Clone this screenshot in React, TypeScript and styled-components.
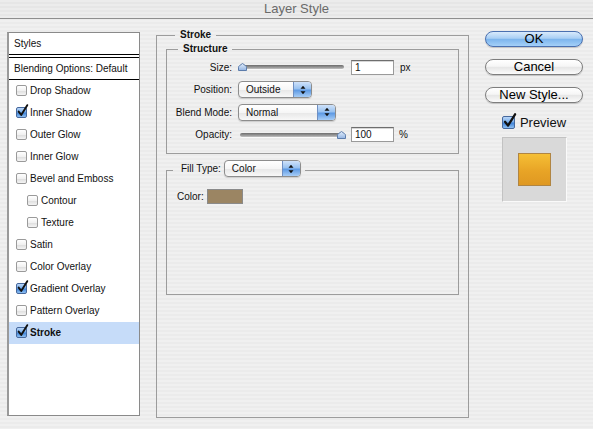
import React from 'react';
import styled, {createGlobalStyle} from 'styled-components';

const GlobalStyle = createGlobalStyle`
  html, body {
    margin: 0;
    padding: 0;
  }
  body {
    width: 593px;
    height: 429px;
    overflow: hidden;
    font-family: "Liberation Sans", Arial, sans-serif;
    color: #111;
    background: repeating-linear-gradient(to bottom, #f0f0f0 0, #f0f0f0 2px, #ebebeb 2px, #ebebeb 4px);
  }
`;

const Window = styled.div`
  width: 593px;
  height: 429px;
  display: flex;
  flex-direction: column;
`;

const TitleBar = styled.div`
  height: 18px;
  line-height: 18px;
  border-bottom: 1px solid #8e8e8e;
  text-align: center;
  font-size: 13px;
  color: #6a6a6a;
  background: repeating-linear-gradient(to bottom, #ececec 0, #ececec 2px, #e6e6e6 2px, #e6e6e6 4px);
`;

const Main = styled.div`
  display: flex;
  align-items: flex-start;
  gap: 16px;
  padding-left: 7px;
`;

/* ---------- left list ---------- */

const StylesPanel = styled.div`
  width: 133px;
  height: 384px;
  margin-top: 13px;
  box-sizing: border-box;
  border: 1px solid #8a8a8a;
  border-left: 2px solid #9a9a9a;
  background: #fff;
  font-size: 10px;
`;

const PanelHeader = styled.div`
  height: 21px;
  line-height: 21px;
  padding-left: 5px;
  border-bottom: 1px solid #000;
`;

const BlendingRow = styled.div`
  height: 21px;
  line-height: 21px;
  margin-top: 2px;
  padding-left: 5px;
  border-top: 1px solid #000;
  border-bottom: 1px solid #000;
`;

const StyleItem = styled.div<{$indent?: boolean; $selected?: boolean}>`
  height: 22px;
  box-sizing: border-box;
  display: flex;
  align-items: center;
  gap: 3px;
  padding: 0 0 2px ${p => (p.$indent ? 18 : 7)}px;
  background: ${p => (p.$selected ? '#c6dcf9' : 'transparent')};
  font-weight: ${p => (p.$selected ? 'bold' : 'normal')};
`;

const Box = styled.span<{$checked?: boolean; $size: number}>`
  position: relative;
  flex: none;
  width: ${p => p.$size}px;
  height: ${p => p.$size}px;
  box-sizing: border-box;
  border-radius: 2px;
  border: 1px solid ${p => (p.$checked ? '#46689c' : '#9a9a9a')};
  background: ${p =>
    p.$checked
      ? 'linear-gradient(#b9d6f8 0%, #79aeea 45%, #3f83d8 55%, #8ec0f3 100%)'
      : 'linear-gradient(#ffffff 0%, #f1f1f1 50%, #dedede 55%, #f4f4f4 100%)'};
`;

const Tick = styled.svg`
  position: absolute;
  left: 0;
  top: -4px;
  overflow: visible;
`;

function Checkbox({checked, size}: {checked?: boolean; size: number}) {
  return (
    <Box $checked={checked} $size={size}>
      {checked && (
        <Tick width={size} height={size + 2} viewBox="0 0 12 14">
          <path d="M1.8 8.2 L4.6 11.8 L11.2 1.2" fill="none" stroke="#111" strokeWidth="2.1" strokeLinecap="round" strokeLinejoin="round" />
        </Tick>
      )}
    </Box>
  );
}

const styleItems = [
  {label: 'Drop Shadow'},
  {label: 'Inner Shadow', checked: true},
  {label: 'Outer Glow'},
  {label: 'Inner Glow'},
  {label: 'Bevel and Emboss'},
  {label: 'Contour', indent: true},
  {label: 'Texture', indent: true},
  {label: 'Satin'},
  {label: 'Color Overlay'},
  {label: 'Gradient Overlay', checked: true},
  {label: 'Pattern Overlay'},
  {label: 'Stroke', checked: true, selected: true},
];

/* ---------- centre group boxes ---------- */

const GroupBox = styled.fieldset<{$width?: number; $height?: number}>`
  margin: 0;
  padding: 0;
  min-width: 0;
  box-sizing: border-box;
  border: 1px solid #9c9c9c;
  ${p => (p.$width ? `width: ${p.$width}px;` : '')}
  ${p => (p.$height ? `height: ${p.$height}px;` : '')}
`;

const StrokeGroup = styled(GroupBox)`
  margin-top: 10px;
`;

const FillGroup = styled(GroupBox)`
  margin-top: 6px;
`;

const GroupTitle = styled.legend<{$indent: number}>`
  margin-left: ${p => p.$indent}px;
  padding: 0 5px;
  font-size: 10px;
  font-weight: bold;
  line-height: 12px;
`;

const FillLegend = styled.legend`
  margin-left: 6px;
  padding: 0 4px 3px 8px;
  display: flex;
  align-items: center;
  gap: 3px;
  font-size: 10px;
`;

const GroupInner = styled.div`
  padding: 2px 9px 0 9px;
`;

const StructureGrid = styled.div`
  display: grid;
  grid-template-columns: 65px 1fr;
  grid-auto-rows: 22.5px;
  column-gap: 6px;
  align-items: center;
  padding: 1px 0 7px;
  font-size: 10px;
`;

const FieldLabel = styled.span`
  text-align: right;
`;

const ControlRow = styled.div`
  display: flex;
  align-items: center;
  gap: 5px;
`;

const Unit = styled.span`
  margin-left: 1px;
`;

const SliderBox = styled.div`
  position: relative;
  width: 108px;
  height: 10px;
  display: flex;
  align-items: center;
`;

const Track = styled.div`
  flex: 1;
  margin: 0 2px;
  height: 4px;
  border-radius: 2px;
  background: linear-gradient(#6d6d6d, #9a9a9a 60%, #c4c4c4);
  box-shadow: 0 1px 0 #fafafa;
`;

const Thumb = styled.svg`
  position: absolute;
  top: 1px;
`;

function Slider({value}: {value: number}) {
  return (
    <SliderBox>
      <Track />
      <Thumb width="9" height="8" viewBox="0 0 9 8" style={{left: `${value * 99}px`}}>
        <defs>
          <linearGradient id={`thumb${value}`} x1="0" y1="0" x2="0" y2="1">
            <stop offset="0" stopColor="#e3eefb" />
            <stop offset="1" stopColor="#93b4e2" />
          </linearGradient>
        </defs>
        <path d="M0.5 7.5 V4.2 Q0.5 3.4 1.3 2.8 L4.5 0.5 L7.7 2.8 Q8.5 3.4 8.5 4.2 V7.5 Z" fill={`url(#thumb${value})`} stroke="#5c7cab" strokeWidth="1" />
      </Thumb>
    </SliderBox>
  );
}

const TextField = styled.div`
  width: 43px;
  height: 15px;
  box-sizing: border-box;
  padding-left: 3px;
  line-height: 13px;
  background: #fff;
  border: 1px solid #9a9a9a;
  border-top-color: #6e6e6e;
  box-shadow: inset 0 1px 0 #d6d6d6;
  font-size: 10px;
`;

const PopupButton = styled.div<{$width: number}>`
  width: ${p => p.$width}px;
  height: 17px;
  box-sizing: border-box;
  display: flex;
  align-items: stretch;
  border: 1px solid #8d8d8d;
  border-radius: 4px;
  overflow: hidden;
  background: linear-gradient(#ffffff 0%, #f6f6f6 50%, #e8e8e8 55%, #f8f8f8 100%);
  box-shadow: 0 1px 1px rgba(0, 0, 0, 0.15);
  font-size: 10px;
`;

const PopupText = styled.span`
  flex: 1;
  padding-left: 7px;
  line-height: 15px;
`;

const PopupArrows = styled.span`
  width: 17px;
  display: flex;
  align-items: center;
  justify-content: center;
  border-left: 1px solid #6f8fc2;
  background: linear-gradient(#cfe2fa 0%, #99c2f0 45%, #5e9ae4 55%, #a7cdf6 100%);
`;

function Popup({value, width}: {value: string; width: number}) {
  return (
    <PopupButton $width={width}>
      <PopupText>{value}</PopupText>
      <PopupArrows>
        <svg width="6" height="10" viewBox="0 0 6 10">
          <path d="M3 0.8 L5.5 3.8 H0.5 Z M0.5 6.2 H5.5 L3 9.2 Z" fill="#111" />
        </svg>
      </PopupArrows>
    </PopupButton>
  );
}

const FillBody = styled.div`
  height: 114px;
  box-sizing: border-box;
  padding: 9px 10px 0;
  display: flex;
  align-items: flex-start;
  gap: 3px;
  font-size: 10px;
`;

const ColorLabel = styled.span`
  line-height: 15px;
`;

const ColorSwatch = styled.div<{$color: string}>`
  width: 36px;
  height: 15px;
  box-sizing: border-box;
  border: 1px solid #8a8a8a;
  background: ${p => p.$color};
`;

/* ---------- right column ---------- */

const SideColumn = styled.div`
  width: 98px;
  margin-top: 12px;
  display: flex;
  flex-direction: column;
  align-items: center;
`;

const AquaButton = styled.div<{$primary?: boolean}>`
  width: 98px;
  height: 16px;
  box-sizing: border-box;
  margin-bottom: 12px;
  border-radius: 8px;
  border: 1px solid ${p => (p.$primary ? '#4a70b0' : '#7e7e7e')};
  background: ${p =>
    p.$primary
      ? 'linear-gradient(#d8eafc 0%, #a9cff4 45%, #7db5ed 52%, #a4d0f8 100%)'
      : 'linear-gradient(#ffffff 0%, #f6f6f6 45%, #e6e6e6 52%, #fbfbfb 100%)'};
  box-shadow: 0 1px 1px rgba(0, 0, 0, 0.18);
  text-align: center;
  font-size: 13px;
  line-height: 14px;
  color: #000;
`;

const PreviewToggle = styled.div`
  height: 16px;
  margin-top: -1px;
  display: flex;
  align-items: center;
  gap: 5px;
  font-size: 13px;
`;

const PreviewWell = styled.div`
  width: 65px;
  height: 65px;
  margin-top: 7px;
  box-sizing: border-box;
  display: flex;
  align-items: center;
  justify-content: center;
  background: #d9d9d9;
  border: 1px solid #c2c2c2;
  border-right-color: #fafafa;
  border-bottom-color: #fafafa;
`;

const PreviewSample = styled.div`
  width: 33px;
  height: 33px;
  box-sizing: border-box;
  border: 1px solid #b08543;
  background: linear-gradient(#f5bf35, #e8a426 55%, #df9822);
`;

export default function App() {
  return (
    <Window>
      <GlobalStyle />
      <TitleBar>Layer Style</TitleBar>
      <Main>
        <StylesPanel>
          <PanelHeader>Styles</PanelHeader>
          <BlendingRow>Blending Options: Default</BlendingRow>
          {styleItems.map(item => (
            <StyleItem key={item.label} $indent={item.indent} $selected={item.selected}>
              <Checkbox checked={item.checked} size={11} />
              {item.label}
            </StyleItem>
          ))}
        </StylesPanel>

        <StrokeGroup $width={313} $height={389}>
          <GroupTitle $indent={18}>Stroke</GroupTitle>
          <GroupInner>
            <GroupBox>
              <GroupTitle $indent={11}>Structure</GroupTitle>
              <StructureGrid>
                <FieldLabel>Size:</FieldLabel>
                <ControlRow>
                  <Slider value={0} />
                  <TextField>1</TextField>
                  <Unit>px</Unit>
                </ControlRow>
                <FieldLabel>Position:</FieldLabel>
                <ControlRow>
                  <Popup value="Outside" width={74} />
                </ControlRow>
                <FieldLabel>Blend Mode:</FieldLabel>
                <ControlRow>
                  <Popup value="Normal" width={98} />
                </ControlRow>
                <FieldLabel>Opacity:</FieldLabel>
                <ControlRow>
                  <Slider value={1} />
                  <TextField>100</TextField>
                  <span>%</span>
                </ControlRow>
              </StructureGrid>
            </GroupBox>

            <FillGroup>
              <FillLegend>
                <span>Fill Type:</span>
                <Popup value="Color" width={77} />
              </FillLegend>
              <FillBody>
                <ColorLabel>Color:</ColorLabel>
                <ColorSwatch $color="#9b8563" />
              </FillBody>
            </FillGroup>
          </GroupInner>
        </StrokeGroup>

        <SideColumn>
          <AquaButton $primary>OK</AquaButton>
          <AquaButton>Cancel</AquaButton>
          <AquaButton>New Style...</AquaButton>
          <PreviewToggle>
            <Checkbox checked size={13} />
            Preview
          </PreviewToggle>
          <PreviewWell>
            <PreviewSample />
          </PreviewWell>
        </SideColumn>
      </Main>
    </Window>
  );
}
